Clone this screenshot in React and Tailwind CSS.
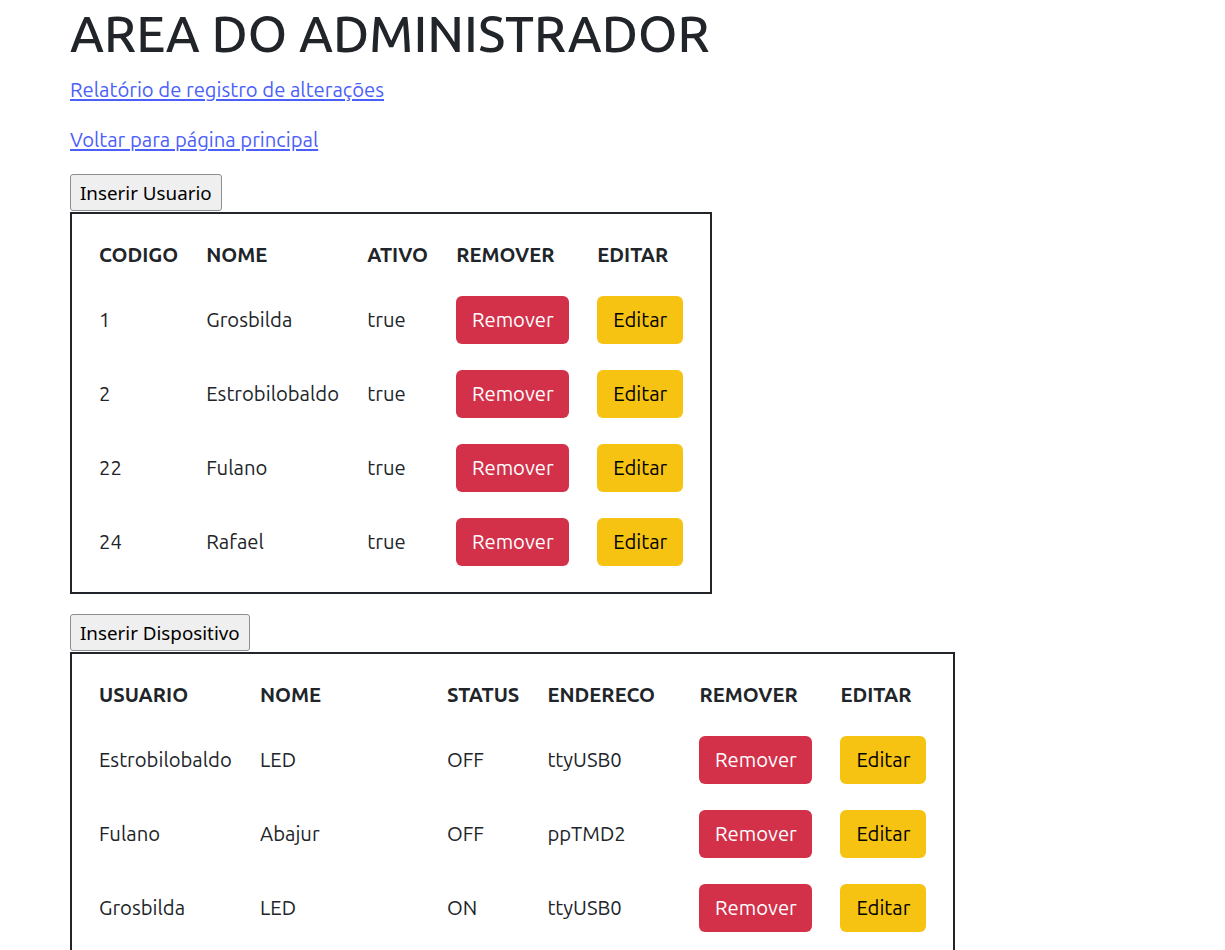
import React from "react";

const users = [
  ["1", "Grosbilda", "true"],
  ["2", "Estrobilobaldo", "true"],
  ["22", "Fulano", "true"],
  ["24", "Rafael", "true"],
];

const devices = [
  ["Estrobilobaldo", "LED", "OFF", "ttyUSB0"],
  ["Fulano", "Abajur", "OFF", "ppTMD2"],
  ["Grosbilda", "LED", "ON", "ttyUSB0"],
];

function RemoveBtn() {
  return (
    <button className="w-[113px] h-[48px] rounded-[6px] bg-[#d33049] text-white text-[20.25px] leading-[30px]">
      Remover
    </button>
  );
}

function EditBtn() {
  return (
    <button className="w-[86px] h-[48px] rounded-[6px] bg-[#f6c312] text-black text-[20.25px] leading-[30px]">
      Editar
    </button>
  );
}

function InsertBtn({ children }) {
  return (
    <button
      className="block h-[37px] mb-[1px] px-[9px] border border-[#8f8f8f] rounded-[3px] bg-[#efefef] text-black text-[18.8px] leading-[24px]"
      style={{ fontFamily: '"Noto Sans", "Open Sans", sans-serif' }}
    >
      {children}
    </button>
  );
}

export default function App() {
  const th = "text-left font-bold px-[14px] py-[13px] leading-[30px] whitespace-nowrap";
  const td = "text-left px-[14px] py-[13px] leading-[30px] whitespace-nowrap";
  return (
    <div
      className="min-h-[950px] bg-white px-[70px] text-[20.25px] leading-[30px] text-[#212529]"
      style={{ fontFamily: 'Ubuntu, "Open Sans", "Noto Sans", sans-serif' }}
    >
      <h1 className="pt-[2px] text-[50.5px] leading-[63px] font-medium mb-[10px]">
        AREA DO ADMINISTRADOR
      </h1>
      <p className="mb-[20px]">
        <a href="#" className="text-[#4b5ffb] underline">
          Relatório de registro de alterações
        </a>
      </p>
      <p className="mb-[19px]">
        <a href="#" className="text-[#4b5ffb] underline">
          Voltar para página principal
        </a>
      </p>
      <InsertBtn>Inserir Usuario</InsertBtn>
      <div className="w-fit border-2 border-[#212529] p-[13px]">
        <table className="border-separate border-spacing-0">
          <thead>
            <tr>
              <th className={`${th} w-[107px]`}>CODIGO</th>
              <th className={`${th} w-[161px]`}>NOME</th>
              <th className={`${th} w-[89px]`}>ATIVO</th>
              <th className={`${th} w-[141px]`}>REMOVER</th>
              <th className={`${th} w-[113px]`}>EDITAR</th>
            </tr>
          </thead>
          <tbody>
            {users.map((u) => (
              <tr key={u[0]}>
                <td className={td}>{u[0]}</td>
                <td className={td}>{u[1]}</td>
                <td className={td}>{u[2]}</td>
                <td className={td}>
                  <RemoveBtn />
                </td>
                <td className={td}>
                  <EditBtn />
                </td>
              </tr>
            ))}
          </tbody>
        </table>
      </div>
      <div className="mt-[20px]">
        <InsertBtn>Inserir Dispositivo</InsertBtn>
      </div>
      <div className="w-fit border-2 border-[#212529] p-[13px]">
        <table className="border-separate border-spacing-0">
          <thead>
            <tr>
              <th className={`${th} w-[161px]`}>USUARIO</th>
              <th className={`${th} w-[187px]`}>NOME</th>
              <th className={`${th} w-[100px]`}>STATUS</th>
              <th className={`${th} w-[152px]`}>ENDERECO</th>
              <th className={`${th} w-[141px]`}>REMOVER</th>
              <th className={`${th} w-[113px]`}>EDITAR</th>
            </tr>
          </thead>
          <tbody>
            {devices.map((d, i) => (
              <tr key={i}>
                <td className={td}>{d[0]}</td>
                <td className={td}>{d[1]}</td>
                <td className={td}>{d[2]}</td>
                <td className={td}>{d[3]}</td>
                <td className={td}>
                  <RemoveBtn />
                </td>
                <td className={td}>
                  <EditBtn />
                </td>
              </tr>
            ))}
          </tbody>
        </table>
      </div>
    </div>
  );
}
